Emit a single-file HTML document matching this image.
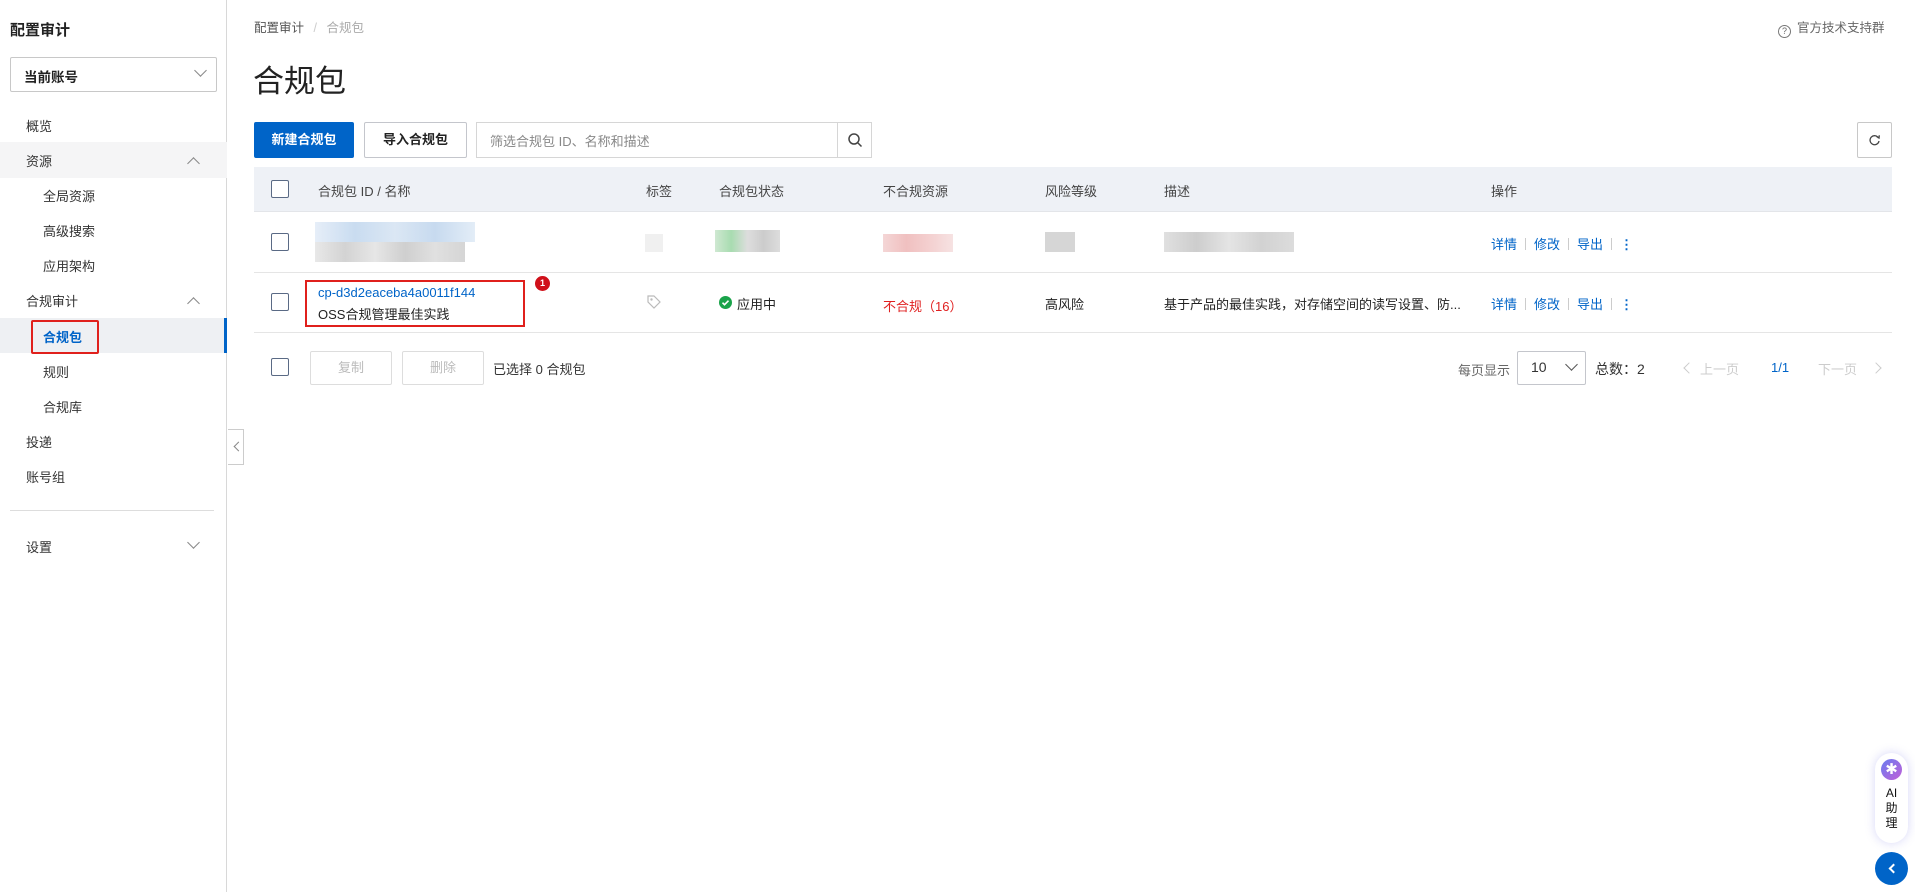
<!DOCTYPE html>
<html><head><meta charset="utf-8"><style>
*{box-sizing:border-box;margin:0;padding:0}
body{width:1915px;height:892px;position:relative;background:#fff;font-family:"Liberation Sans","Noto Sans CJK SC",sans-serif;font-size:13px;color:#333;overflow:hidden}
.a{position:absolute;white-space:nowrap}
.side{position:absolute;left:0;top:0;width:227px;height:892px;border-right:1px solid #d8d8d8;background:#fff}
.cb{position:absolute;width:18px;height:18px;border:1.5px solid #5a6a85;border-radius:2px;background:#fff}
.chev{position:absolute;width:9px;height:9px;border-left:1.5px solid #888;border-top:1.5px solid #888}
.blk{position:absolute}
.link{color:#0064c8}
.sep{display:inline-block;width:1px;height:12px;background:#ccc;margin:0 8px;vertical-align:-1px}
</style></head><body>
<div class="side">
 <div class="a" style="left:10px;top:19px;font-size:15px;font-weight:bold;color:#222">配置审计</div>
 <div class="a" style="left:10px;top:57px;width:207px;height:35px;border:1px solid #c8c8c8;border-radius:2px"></div>
 <div class="a" style="left:24px;top:66px;font-size:13.5px;font-weight:bold;color:#222">当前账号</div>
 <div class="chev" style="left:196px;top:66px;transform:rotate(225deg)"></div>
 <div class="a" style="left:0;top:142px;width:227px;height:36px;background:#f5f5f6"></div>
 <div class="a" style="left:0;top:318px;width:224px;height:35px;background:#eef0f3"></div>
 <div class="a" style="left:224px;top:318px;width:3px;height:35px;background:#0064c8"></div>
 <div class="a" style="left:26px;top:116px">概览</div>
 <div class="a" style="left:26px;top:151px">资源</div>
 <div class="chev" style="left:189px;top:159px;transform:rotate(45deg)"></div>
 <div class="a" style="left:43px;top:186px">全局资源</div>
 <div class="a" style="left:43px;top:221px">高级搜索</div>
 <div class="a" style="left:43px;top:256px">应用架构</div>
 <div class="a" style="left:26px;top:291px">合规审计</div>
 <div class="chev" style="left:189px;top:299px;transform:rotate(45deg)"></div>
 <div class="a" style="left:43px;top:327px;font-weight:bold;color:#0064c8">合规包</div>
 <div class="a" style="left:31px;top:320px;width:68px;height:34px;border:2px solid #e0201c;border-radius:2px"></div>
 <div class="a" style="left:43px;top:362px">规则</div>
 <div class="a" style="left:43px;top:397px">合规库</div>
 <div class="a" style="left:26px;top:432px">投递</div>
 <div class="a" style="left:26px;top:467px">账号组</div>
 <div class="a" style="left:10px;top:510px;width:204px;height:1px;background:#ddd"></div>
 <div class="a" style="left:26px;top:537px">设置</div>
 <div class="chev" style="left:189px;top:538px;transform:rotate(225deg)"></div>
</div>
<div class="a" style="left:228px;top:429px;width:16px;height:36px;border:1px solid #ccc;border-left:none;background:#fff"></div>
<div class="chev" style="left:235px;top:443px;width:7px;height:7px;transform:rotate(-45deg)"></div>

<div class="a" style="left:254px;top:17px;font-size:12.5px;color:#555">配置审计 <span style="color:#ccc;margin:0 6px">/</span> <span style="color:#aaa">合规包</span></div>
<div class="a" style="left:1778px;top:17px;font-size:12.5px;color:#666"><span style="display:inline-block;width:13px;height:13px;border:1.3px solid #777;border-radius:50%;font-size:9px;text-align:center;line-height:11px;vertical-align:-2px;margin-right:6px">?</span>官方技术支持群</div>
<div class="a" style="left:253px;top:56px;font-size:31px;color:#222">合规包</div>

<div class="a" style="left:254px;top:122px;width:100px;height:36px;background:#0064c8;border-radius:2px;color:#fff;font-weight:bold;text-align:center;line-height:36px">新建合规包</div>
<div class="a" style="left:364px;top:122px;width:103px;height:36px;border:1px solid #c4c6cc;border-radius:2px;font-weight:bold;text-align:center;line-height:34px;color:#222">导入合规包</div>
<div class="a" style="left:476px;top:122px;width:396px;height:36px;border:1px solid #d6d6d6"></div>
<div class="a" style="left:490px;top:131px;color:#888">筛选合规包 ID、名称和描述</div>
<div class="a" style="left:837px;top:122px;width:1px;height:36px;background:#d6d6d6"></div>
<svg class="a" style="left:847px;top:132px" width="16" height="16" viewBox="0 0 16 16"><circle cx="7" cy="7" r="5" fill="none" stroke="#444" stroke-width="1.5"/><path d="M11 11l3.5 3.5" stroke="#444" stroke-width="1.5"/></svg>
<div class="a" style="left:1857px;top:122px;width:35px;height:36px;border:1px solid #c8c8c8;border-radius:2px"></div>
<svg class="a" style="left:1868px;top:134px" width="13" height="13" viewBox="0 0 13 13"><path d="M10.5 4A4.5 4.5 0 1 0 11 7" fill="none" stroke="#444" stroke-width="1.3"/><path d="M8.5 2.5L11 4 11.3 1.3" fill="none" stroke="#444" stroke-width="1.3"/></svg>

<div class="a" style="left:254px;top:167px;width:1638px;height:45px;background:#eef1f6;border-bottom:1px solid #e3e5e9"></div>
<div class="cb" style="left:271px;top:180px"></div>
<div class="a" style="left:318px;top:181px;color:#444">合规包 ID / 名称</div>
<div class="a" style="left:646px;top:181px;color:#444">标签</div>
<div class="a" style="left:719px;top:181px;color:#444">合规包状态</div>
<div class="a" style="left:883px;top:181px;color:#444">不合规资源</div>
<div class="a" style="left:1045px;top:181px;color:#444">风险等级</div>
<div class="a" style="left:1164px;top:181px;color:#444">描述</div>
<div class="a" style="left:1491px;top:181px;color:#444">操作</div>

<div class="a" style="left:254px;top:272px;width:1638px;height:1px;background:#e5e5e5"></div>
<div class="a" style="left:254px;top:332px;width:1638px;height:1px;background:#e5e5e5"></div>

<div class="cb" style="left:271px;top:233px"></div>
<div class="blk" style="left:315px;top:222px;width:160px;height:20px;background:linear-gradient(90deg,#e6eef8,#c9dcf0,#dbe7f4,#c7daef,#e3edf7)"></div>
<div class="blk" style="left:315px;top:242px;width:150px;height:20px;background:linear-gradient(90deg,#e8e8e8,#d3d3d3,#e6e6e6,#cfcfcf,#e0e0e0,#d5d5d5)"></div>
<div class="blk" style="left:645px;top:234px;width:18px;height:18px;background:#f0f0f0"></div>
<div class="blk" style="left:715px;top:230px;width:65px;height:22px;background:linear-gradient(90deg,#cfe8d2,#a8dcb0,#ddd,#ccc,#ddd)"></div>
<div class="blk" style="left:883px;top:234px;width:70px;height:18px;background:linear-gradient(90deg,#f4d6d6,#f0c0c0,#f4d0d0,#f6e2e2)"></div>
<div class="blk" style="left:1045px;top:232px;width:30px;height:20px;background:#d6d6d6"></div>
<div class="blk" style="left:1164px;top:232px;width:130px;height:20px;background:linear-gradient(90deg,#e0e0e0,#cdcdcd,#e4e4e4,#d2d2d2,#dcdcdc)"></div>
<div class="a" style="left:1491px;top:234px"><span class="link">详情</span><span class="sep"></span><span class="link">修改</span><span class="sep"></span><span class="link">导出</span><span class="sep"></span><span class="link" style="font-weight:bold">⋮</span></div>

<div class="cb" style="left:271px;top:293px"></div>
<div class="a link" style="left:318px;top:285px">cp-d3d2eaceba4a0011f144</div>
<div class="a" style="left:318px;top:304px;color:#222">OSS合规管理最佳实践</div>
<div class="a" style="left:305px;top:280px;width:220px;height:47px;border:2px solid #e0201c"></div>
<div class="a" style="left:535px;top:276px;width:15px;height:15px;border-radius:50%;background:#d0101a;color:#fff;font-size:9px;font-weight:bold;text-align:center;line-height:15px">1</div>
<svg class="a" style="left:646px;top:294px" width="16" height="16" viewBox="0 0 16 16"><path d="M2 2h6l6 6-6 6-6-6z" fill="none" stroke="#bbb" stroke-width="1.2"/><circle cx="5.5" cy="5.5" r="1.2" fill="#bbb"/></svg>
<svg class="a" style="left:719px;top:296px" width="13" height="13" viewBox="0 0 13 13"><circle cx="6.5" cy="6.5" r="6.5" fill="#1aa34a"/><path d="M3.5 6.7l2 2 4-4" stroke="#fff" stroke-width="1.6" fill="none"/></svg>
<div class="a" style="left:737px;top:294px;color:#222">应用中</div>
<div class="a" style="left:883px;top:296px;color:#e02020">不合规（16）</div>
<div class="a" style="left:1045px;top:294px;color:#222">高风险</div>
<div class="a" style="left:1164px;top:294px;color:#222">基于产品的最佳实践，对存储空间的读写设置、防...</div>
<div class="a" style="left:1491px;top:294px"><span class="link">详情</span><span class="sep"></span><span class="link">修改</span><span class="sep"></span><span class="link">导出</span><span class="sep"></span><span class="link" style="font-weight:bold">⋮</span></div>

<div class="cb" style="left:271px;top:358px"></div>
<div class="a" style="left:310px;top:351px;width:82px;height:34px;border:1px solid #ddd;border-radius:2px;color:#bbb;text-align:center;line-height:32px">复制</div>
<div class="a" style="left:402px;top:351px;width:82px;height:34px;border:1px solid #ddd;border-radius:2px;color:#bbb;text-align:center;line-height:32px">删除</div>
<div class="a" style="left:493px;top:359px;color:#333">已选择 0 合规包</div>
<div class="a" style="left:1458px;top:360px;color:#666">每页显示</div>
<div class="a" style="left:1517px;top:351px;width:69px;height:34px;border:1px solid #c4c6cc;border-radius:2px"></div>
<div class="a" style="left:1531px;top:359px;font-size:14px">10</div>
<div class="chev" style="left:1567px;top:360px;transform:rotate(225deg);border-color:#555"></div>
<div class="a" style="left:1595px;top:359px;font-size:14px">总数：2</div>
<div class="chev" style="left:1685px;top:364px;width:8px;height:8px;transform:rotate(-45deg);border-color:#ccc"></div>
<div class="a" style="left:1700px;top:359px;color:#ccc">上一页</div>
<div class="a" style="left:1771px;top:360px;color:#0064c8">1/1</div>
<div class="a" style="left:1818px;top:359px;color:#ccc">下一页</div>
<div class="chev" style="left:1872px;top:364px;width:8px;height:8px;transform:rotate(135deg);border-color:#ccc"></div>

<div class="a" style="left:1875px;top:753px;width:33px;height:90px;border-radius:17px;background:#fff;box-shadow:0 0 10px rgba(120,120,230,.3)"></div>
<div class="a" style="left:1881px;top:759px;width:21px;height:21px;border-radius:50%;background:linear-gradient(135deg,#6a7cf0,#c060d8);color:#fff;font-size:15px;text-align:center;line-height:21px">✱</div>
<div class="a" style="left:1875px;top:786px;width:33px;text-align:center;font-size:12px;line-height:15px;color:#111;white-space:normal">AI<br>助<br>理</div>
<div class="a" style="left:1875px;top:852px;width:33px;height:33px;border-radius:50%;background:#0064c8"></div>
<div class="chev" style="left:1890px;top:865px;width:7px;height:7px;transform:rotate(-45deg);border-color:#fff;border-width:2px"></div>
</body></html>
